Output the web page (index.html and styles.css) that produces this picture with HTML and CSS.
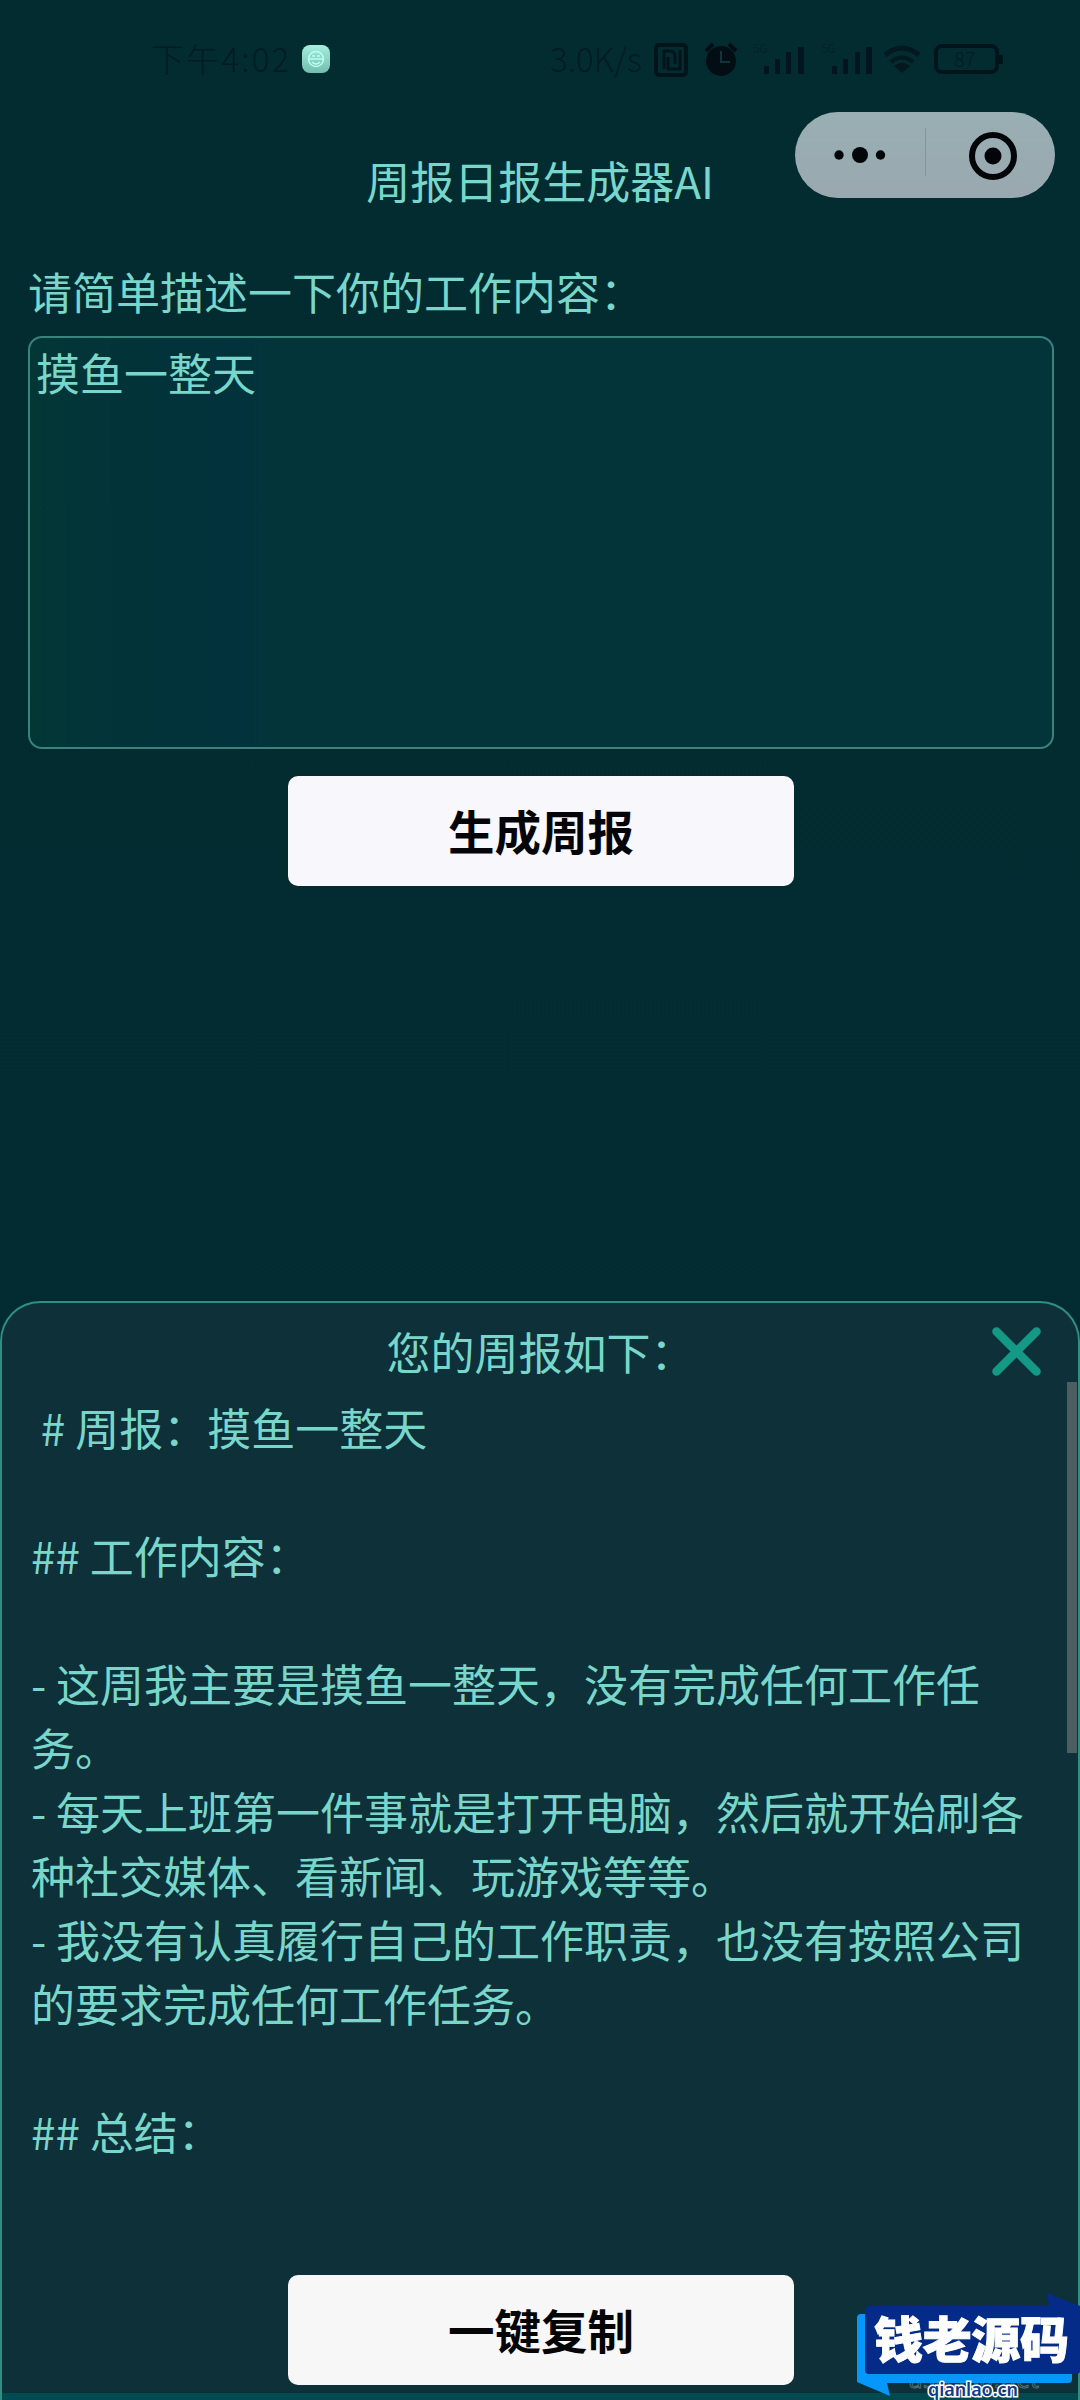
FILE: index.html
```html
<!DOCTYPE html>
<html lang="zh-CN">
<head>
<meta charset="utf-8">
<title>周报日报生成器AI</title>
<link rel="stylesheet" href="styles.css">
</head>
<body>
<div class="screen">
  <header class="status">
    <span class="time">下午4:02</span>
    <svg class="app-icon" width="28" height="28" viewBox="0 0 28 28">
      <defs><linearGradient id="mint" x1="0" y1="0" x2="0" y2="1"><stop offset="0" stop-color="#a4efdd"/><stop offset="1" stop-color="#72bdab"/></linearGradient></defs>
      <rect width="28" height="28" rx="8" fill="url(#mint)"/>
      <circle cx="14" cy="14" r="7.5" fill="none" stroke="#b9fff0" stroke-width="1.5"/>
      <path d="M7 14h14M10 11h3M15 11h3M10 17q4 4 8 0" fill="none" stroke="#b9fff0" stroke-width="1.3"/>
    </svg>
    <span class="speed">3.0K/s</span>
    <svg class="status-icons" width="356" height="40" viewBox="0 0 356 40">
      <g fill="none" stroke="#021319" stroke-width="4">
        <rect x="4" y="6" width="30" height="30" rx="3"/>
        <path d="M12 30V12H18Q23 12 23 18V25M16 18V30H28V11" stroke-width="3"/>
      </g>
      <circle cx="69" cy="22" r="15" fill="#020e13"/>
      <path d="M54 12l7-7M84 12l-7-7" stroke="#020e13" stroke-width="4"/>
      <path d="M69 12v11h9" fill="none" stroke="#12333a" stroke-width="2"/>
      <g fill="#02141f">
        <path d="M112 27h5v8h-5zM123 20h5v15h-5zM134 13h5v22h-5zM146 8h6v27h-6zM180 27h5v8h-5zM191 20h5v15h-5zM203 13h5v22h-5zM214 8h6v27h-6z"/>
      </g>
      <g class="network"><text x="101" y="14">5G</text><text x="169" y="14">5G</text></g>
      <path d="M233 16Q250 2 267 16" fill="none" stroke="#03181f" stroke-width="5"/>
      <path d="M239 23Q250 14 261 23" fill="none" stroke="#03181f" stroke-width="4"/>
      <path d="M242 27Q250 20 258 27L250 34Z" fill="#03181f"/>
      <rect x="284" y="7" width="61" height="26" rx="6" fill="none" stroke="#02141b" stroke-width="4"/>
      <path d="M347 16h4v9h-4z" fill="#02141b"/>
      <text class="charge" x="302" y="28">87</text>
    </svg>
  </header>

  <nav class="titlebar">
    <h1 class="title">周报日报生成器AI</h1>
    <div class="capsule">
      <svg width="260" height="86" viewBox="0 0 260 86">
        <g fill="#020609"><circle cx="44" cy="43" r="4.7"/><circle cx="65" cy="43" r="8"/><circle cx="85.5" cy="43" r="4.7"/><circle cx="198" cy="44" r="8.5"/></g>
        <path d="M130.5 16v48" stroke="#83979b" stroke-width="1"/>
        <circle cx="198" cy="44" r="21" fill="none" stroke="#020609" stroke-width="6"/>
      </svg>
    </div>
  </nav>

  <main class="form">
    <label class="label" for="work">请简单描述一下你的工作内容：</label>
    <div class="field" id="work">摸鱼一整天</div>
    <button class="button">生成周报</button>
  </main>

  <section class="sheet">
    <div class="sheet-head">
      <h2 class="sheet-title">您的周报如下：</h2>
      <svg class="close" width="49" height="49" viewBox="0 0 49 49"><path d="M4.5 4.5L44.5 44.5M44.5 4.5L4.5 44.5" stroke="#149986" stroke-width="8.5" stroke-linecap="round"/></svg>
    </div>
    <div class="report-row">
      <div class="report"> # 周报：摸鱼一整天

## 工作内容：

- 这周我主要是摸鱼一整天，没有完成任何工作任
务。
- 每天上班第一件事就是打开电脑，然后就开始刷各
种社交媒体、看新闻、玩游戏等等。
- 我没有认真履行自己的工作职责，也没有按照公司
的要求完成任何工作任务。

## 总结：</div>
      <div class="scrollbar"></div>
    </div>
    <button class="button">一键复制</button>
    <div class="bottom-strip"></div>
  </section>

  <svg class="watermark" width="230" height="112" viewBox="0 0 230 112">
    <text class="mark-under" x="59" y="100" textLength="130">asp300.net</text>
    <path d="M11 26H218Q222 26 222 30V91Q222 95 218 95H37L40 108L7 94V30Q7 26 11 26Z" fill="#0697fb"/>
    <path d="M19 18H199L197 5L230 18V83Q230 86 226 86H19Q15 86 15 82V22Q15 18 19 18Z" fill="#032b87"/>
    <text class="mark-name" x="24" y="70" textLength="195">钱老源码</text>
    <text class="mark-url" x="78" y="108" textLength="90">qianlao.cn</text>
  </svg>
</div>
</body>
</html>
```
FILE: styles.css
```css
* { box-sizing: border-box; }
body {
  margin: 0;
  background: #022b30;
  color: #79d6ca;
  font-family: "Noto Sans CJK SC", sans-serif;
}
.screen {
  position: relative;
  display: flex;
  flex-direction: column;
  width: 1080px;
  height: 2400px;
  overflow: hidden;
  background: linear-gradient(#032c31, #012b30);
}
.status {
  display: flex;
  align-items: center;
  height: 112px;
  padding: 12px 0 0 151px;
  color: #021c24;
  font-size: 33px;
  font-weight: 300;
}
.time { width: 151px; white-space: nowrap; margin-top: -9px; letter-spacing: 2.2px; }
.speed { width: 102px; margin-left: 220px; margin-top: -9px; white-space: nowrap; }
.app-icon, .status-icons { margin-top: -6px; }
.network { font-size: 12px; fill: #02202a; }
.charge { font-size: 20px; fill: #021c24; }
.titlebar {
  display: grid;
  grid-template-columns: 795px 260px;
  height: 140px;
}
.title {
  margin: 36px 0 0 285px;
  width: 510px;
  text-align: center;
  font-size: 44px;
  line-height: 64px;
  font-weight: 400;
}
.capsule {
  height: 86px;
  border-radius: 43px;
  background: linear-gradient(#98afb3, #9aa8b0);
}
.capsule svg { display: block; }
.form {
  display: flex;
  flex-direction: column;
  align-items: center;
  height: 1049px;
  padding-left: 2px;
}
.label {
  width: 1026px;
  height: 84px;
  padding-top: 7px;
  font-size: 44px;
  line-height: 64px;
}
.field {
  width: 1026px;
  height: 413px;
  margin-bottom: 27px;
  padding: 2px 6px;
  border: 2px solid #3a827c;
  border-radius: 14px;
  background: linear-gradient(90deg, #023736, #023339 9%, #02333c 20%, #03343a 24%);
  font-size: 44px;
  line-height: 64px;
}
.button {
  flex: none;
  width: 506px;
  height: 110px;
  padding: 0 0 2px;
  border: 0;
  border-radius: 10px;
  background: #f8f7fb;
  color: #050409;
  font: 700 46.5px/64px "Noto Sans CJK SC", sans-serif;
}
.sheet {
  display: flex;
  flex-direction: column;
  align-items: center;
  height: 1099px;
  border: 2px solid #2f8d82;
  border-bottom: 0;
  border-radius: 40px 40px 0 0;
  background: #0e3039;
}
.sheet .button { margin: 1px 0 0 2px; background: #f7f7f8; color: #050505; }
.sheet-head {
  display: grid;
  grid-template-columns: 990px 49px;
  width: 1076px;
  height: 79px;
}
.sheet-title {
  margin: 16px 0 0 87px;
  text-align: center;
  font-size: 44px;
  line-height: 64px;
  font-weight: 400;
}
.close { margin-top: 24px; }
.report-row {
  display: flex;
  justify-content: space-between;
  width: 1076px;
  height: 892px;
  padding-left: 29px;
  padding-right: 1px;
}
.report {
  padding-top: 13px;
  white-space: pre;
  font-size: 44px;
  line-height: 64px;
}
.scrollbar { width: 10px; height: 371px; background: #4d5d61; }
.bottom-strip { width: 1076px; height: 7px; margin-top: 8px; background: #014a50; }
.watermark { position: absolute; left: 850px; bottom: 0; }
.mark-name { font-size: 49px; font-weight: 900; fill: #fff; stroke: #fff; stroke-width: 1; }
.mark-under {
  font-family: "Noto Sans", sans-serif;
  font-size: 24px;
  fill: #0c3339;
  stroke: #4f7278;
  stroke-width: 1;
}
.mark-url {
  font-family: "Noto Sans", sans-serif;
  font-size: 18px;
  font-weight: 600;
  fill: #123a86;
  stroke: #fff;
  stroke-width: 3;
  paint-order: stroke;
}
```
